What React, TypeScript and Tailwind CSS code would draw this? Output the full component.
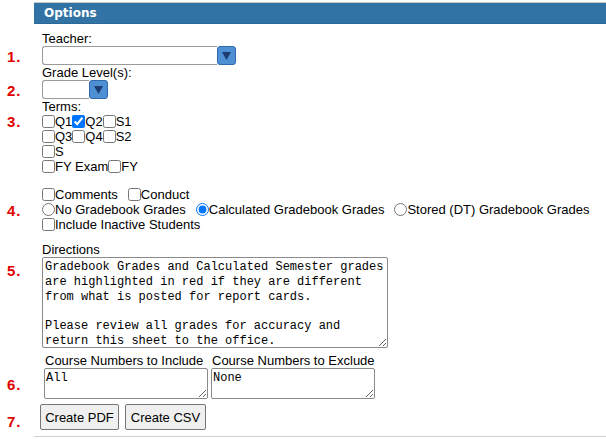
import React from 'react';

const directions = `Gradebook Grades and Calculated Semester grades
are highlighted in red if they are different
from what is posted for report cards.

Please review all grades for accuracy and
return this sheet to the office.`;

function Num({ n, className }: { n?: string; className?: string }) {
  return (
    <div className={'w-[42px] shrink-0 pl-[7px] font-bold text-[15px] leading-[15px] tracking-[1px] text-[#e00000] ' + (className ?? '')}>
      {n}
    </div>
  );
}

function Check({ label, checked }: { label: string; checked?: boolean }) {
  return (
    <label className="flex items-center">
      <input type="checkbox" defaultChecked={checked} className="m-0 h-[13px] w-[13px]" />
      <span>{label}</span>
    </label>
  );
}

function Radio({ label, checked }: { label: string; checked?: boolean }) {
  return (
    <label className="flex items-center">
      <input type="radio" name="gbgrades" defaultChecked={checked} className="m-0 h-[13px] w-[13px]" />
      <span>{label}</span>
    </label>
  );
}

function Arrow() {
  return (
    <div className="flex h-[19px] w-[19px] shrink-0 items-center justify-center rounded-[3px] border border-[#2f6aad] bg-[#4f8fd4]">
      <svg width="9" height="8" viewBox="0 0 9 8">
        <polygon points="0,0 9,0 4.5,8" fill="#1b3d6f" />
      </svg>
    </div>
  );
}

export default function App() {
  return (
    <div className="h-[439px] w-[606px] overflow-hidden bg-white font-['Liberation_Sans',Arial,sans-serif] text-[13px] leading-[15px] text-black">
      {/* Options header */}
      <div className="ml-[34px] mt-[2px] border-t border-[#c8c8c8]">
        <div className="h-[21px] border-b border-[#2c6796] bg-[#3273a5] pl-[10px] font-['DejaVu_Sans',Verdana,sans-serif] text-[12px] font-bold leading-[21px] text-white">
          Options
        </div>
      </div>

      {/* Teacher */}
      <div className="mt-[8px] pl-[42px] leading-[14px]">Teacher:</div>
      <div className="flex h-[19px]">
        <Num n="1." className="pt-[3px]" />
        <div className="flex w-[194px]">
          <div className="flex-1 rounded-l-[3px] border border-r-0 border-[#9a9a9a] bg-white" />
          <Arrow />
        </div>
      </div>

      {/* Grade level */}
      <div className="pl-[42px]">Grade Level(s):</div>
      <div className="flex h-[19px]">
        <Num n="2." className="pt-[3px]" />
        <div className="flex w-[66px]">
          <div className="flex-1 rounded-l-[3px] border border-r-0 border-[#9a9a9a] bg-white" />
          <Arrow />
        </div>
      </div>

      {/* Terms */}
      <div className="pl-[42px]">Terms:</div>
      <div className="flex">
        <Num n="3." className="pt-[0px]" />
        <div className="flex flex-col">
          <div className="flex h-[15px]">
            <Check label="Q1" />
            <Check label="Q2" checked />
            <Check label="S1" />
          </div>
          <div className="flex h-[15px]">
            <Check label="Q3" />
            <Check label="Q4" />
            <Check label="S2" />
          </div>
          <div className="flex h-[15px]">
            <Check label="S" />
          </div>
          <div className="flex h-[15px]">
            <Check label="FY Exam" />
            <Check label="FY" />
          </div>
        </div>
      </div>

      {/* Comments / gradebook options */}
      <div className="mt-[13px] flex h-[15px] gap-[10px] pl-[42px]">
        <Check label="Comments" />
        <Check label="Conduct" />
      </div>
      <div className="flex h-[15px]">
        <Num n="4." className="pt-[1px]" />
        <div className="flex gap-[10px]">
          <Radio label="No Gradebook Grades" />
          <Radio label="Calculated Gradebook Grades" checked />
          <Radio label="Stored (DT) Gradebook Grades" />
        </div>
      </div>
      <div className="flex h-[15px] pl-[42px]">
        <Check label="Include Inactive Students" />
      </div>

      {/* Directions */}
      <div className="mt-[11px] pl-[42px] leading-[14px]">Directions</div>
      <div className="flex">
        <Num n="5." className="pt-[6px]" />
        <textarea
          wrap="off"
          defaultValue={directions}
          className="h-[91px] w-[346px] resize overflow-hidden rounded-[2px] border border-[#8a8a8a] px-[2px] py-[2px] font-['Liberation_Mono','Courier_New',monospace] text-[12px] leading-[14.8px] text-black"
        />
      </div>

      {/* Course numbers */}
      <div className="mt-[5px] flex">
        <Num n="6." className="pt-[24px]" />
        <div className="ml-[2px] flex w-[164px] flex-col">
          <div className="pl-[1px]">Course Numbers to Include</div>
          <textarea
            defaultValue="All"
            className="h-[31px] w-[164px] resize overflow-hidden rounded-[2px] border border-[#8a8a8a] px-[1px] py-[2px] font-['Liberation_Mono','Courier_New',monospace] text-[12px] leading-[14.8px] text-black"
          />
        </div>
        <div className="ml-[3px] flex w-[164px] flex-col">
          <div className="pl-[1px]">Course Numbers to Exclude</div>
          <textarea
            defaultValue="None"
            className="h-[31px] w-[164px] resize overflow-hidden rounded-[2px] border border-[#8a8a8a] px-[1px] py-[2px] font-['Liberation_Mono','Courier_New',monospace] text-[12px] leading-[14.8px] text-black"
          />
        </div>
      </div>

      {/* Buttons */}
      <div className="mt-[5px] flex">
        <Num n="7." className="pt-[10px]" />
        <div className="-ml-[2px] flex gap-[6px]">
          <button className="h-[26px] w-[79px] rounded-[2px] border border-[#767676] bg-[#efefef] text-center text-[13px]">
            Create PDF
          </button>
          <button className="h-[26px] w-[81px] rounded-[2px] border border-[#767676] bg-[#efefef] text-center text-[13px]">
            Create CSV
          </button>
        </div>
      </div>

      <div className="ml-[34px] mt-[6px] h-px bg-[#d0d0d0]" />
    </div>
  );
}
